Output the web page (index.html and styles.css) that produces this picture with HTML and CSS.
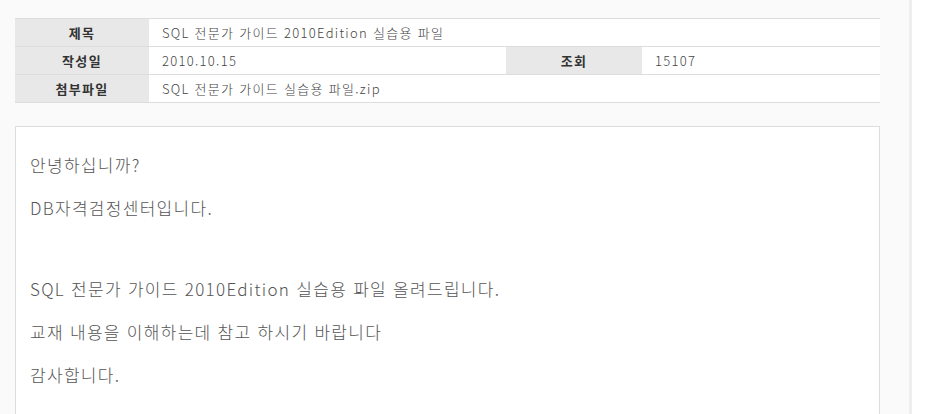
FILE: index.html
```html
<!DOCTYPE html>
<html lang="ko">
<head>
<meta charset="utf-8">
<link rel="stylesheet" href="styles.css">
</head>
<body>
<div class="page">
  <div class="main">
    <table class="info">
      <colgroup>
        <col class="c1"><col class="c2"><col class="c3"><col class="c4">
      </colgroup>
      <tr>
        <th>제목</th>
        <td colspan="3">SQL 전문가 가이드 2010Edition 실습용 파일</td>
      </tr>
      <tr>
        <th>작성일</th>
        <td>2010.10.15</td>
        <th>조회</th>
        <td>15107</td>
      </tr>
      <tr>
        <th>첨부파일</th>
        <td colspan="3">SQL 전문가 가이드 실습용 파일.zip</td>
      </tr>
    </table>
    <div class="content">
      <p>안녕하십니까?</p>
      <p>DB자격검정센터입니다.</p>
      <p class="blank">&nbsp;</p>
      <p>SQL 전문가 가이드 2010Edition 실습용 파일 올려드립니다.</p>
      <p>교재 내용을 이해하는데 참고 하시기 바랍니다</p>
      <p>감사합니다.</p>
    </div>
  </div>
  <div class="side"></div>
</div>
</body>
</html>
```
FILE: styles.css
```css
html, body {
  margin: 0;
  padding: 0;
  height: 100%;
  overflow: hidden;
}
body {
  font-family: "Noto Sans CJK KR", "Noto Sans", sans-serif;
  color: #444;
}
.page {
  display: flex;
  height: 100%;
}
.main {
  width: 909px;
  background: #fafafa;
  padding: 18px 0 0 15px;
  box-sizing: border-box;
}
.side {
  flex: 1;
  border-left: 3px solid #eeeeee;
  background: #ffffff;
}
.info {
  width: 865px;
  border-collapse: collapse;
  table-layout: fixed;
  font-size: 13px;
  letter-spacing: 1.3px;
  border-top: 1px solid #dddddd;
}
.c1 { width: 134px; }
.c2 { width: 357px; }
.c3 { width: 136px; }
.info th, .info td {
  height: 27px;
  padding: 0;
  border-bottom: 1px solid #dddddd;
  box-sizing: border-box;
  line-height: 27px;
  white-space: nowrap;
}
.info th {
  background: #e8e8e8;
  color: #333;
  font-weight: bold;
  text-align: center;
}
.info td {
  background: #ffffff;
  padding-left: 13px;
  text-align: left;
  color: #444;
  font-weight: 300;
}
.content {
  margin-top: 23px;
  width: 865px;
  box-sizing: border-box;
  height: 400px;
  background: #ffffff;
  border: 1px solid #dddddd;
  padding: 16px 14px;
  font-size: 17px;
  letter-spacing: 1.3px;
  font-weight: 300;
  color: #555;
}
.content p {
  margin: 0;
  line-height: 43px;
}
.content .blank {
  line-height: 38px;
}
```
